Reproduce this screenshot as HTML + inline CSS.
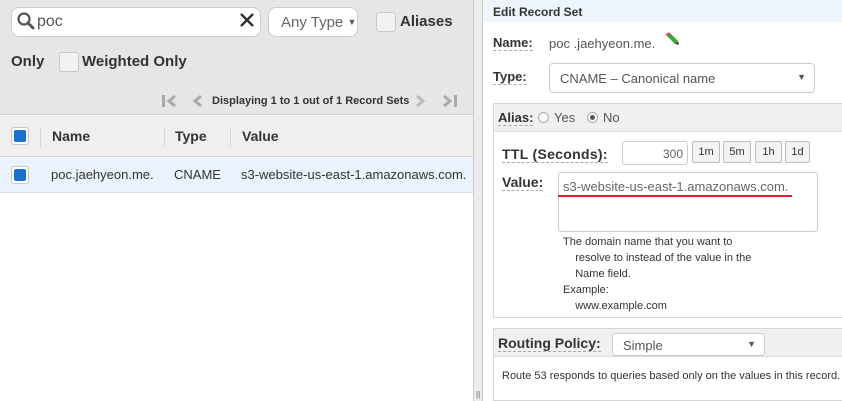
<!DOCTYPE html>
<html><head><meta charset="utf-8"><style>
*{box-sizing:border-box}
body{margin:0;width:842px;height:401px;overflow:hidden;font-family:"Liberation Sans",Arial,sans-serif;background:#fff;position:relative;color:#333}
.abs{position:absolute}
.left{left:0;top:0;width:473px;height:401px;background:#fff}
.lt{left:0;top:0;width:473px;height:115px;background:#e6e6e6;border-bottom:1px solid #d0d0d0}
.cb{position:absolute;width:20px;height:20px;border:1px solid #c8c8c8;border-radius:3px;background:#f2f2f2}
.cbb{position:absolute;width:18px;height:18px;border:1px solid #c8c8c8;border-radius:3px;background:#fff}
.cbb:after{content:"";position:absolute;left:2px;top:2px;width:12px;height:12px;background:#1a6fd0;border-radius:2px}
.b{font-weight:bold;color:#333}
.lbl{font-weight:bold;color:#333;border-bottom:1px dashed #aaa;display:inline-block}
</style></head><body>
<div class="abs left"></div>
<div class="abs lt"></div>
<div class="abs" style="left:11px;top:7px;width:250px;height:30px;background:#fff;border:1px solid #ccc;border-radius:8px"></div>
<svg class="abs" style="left:16px;top:11px" width="20" height="20"><circle cx="8" cy="8" r="5.5" fill="none" stroke="#555" stroke-width="2.2"/><line x1="12" y1="12" x2="17" y2="17" stroke="#555" stroke-width="3" stroke-linecap="round"/></svg>
<div class="abs" style="left:37px;top:13px;font-size:16px;color:#555">poc</div>
<svg class="abs" style="left:240px;top:13px" width="14" height="14"><path d="M1 1L13 13M13 1L1 13" stroke="#333" stroke-width="2.4"/></svg>
<div class="abs" style="left:268px;top:7px;width:90px;height:30px;background:#fff;border:1px solid #ccc;border-radius:8px;font-size:15px;color:#666;padding:6px 0 0 12px">Any Type <span style="font-size:9px;color:#555;position:relative;top:-2px">▼</span></div>
<div class="cb" style="left:376px;top:12px"></div>
<div class="abs b" style="left:400px;top:13px;font-size:15px">Aliases</div>
<div class="abs b" style="left:11px;top:53px;font-size:15px">Only</div>
<div class="cb" style="left:59px;top:52px"></div>
<div class="abs b" style="left:82px;top:53px;font-size:15px">Weighted Only</div>
<svg class="abs" style="left:161px;top:94px" width="20" height="14"><rect x="1" y="1" width="3" height="12" fill="#aaa"/><path d="M14 2L8 7L14 12" fill="none" stroke="#aaa" stroke-width="3"/></svg>
<svg class="abs" style="left:191px;top:94px" width="14" height="14"><path d="M10 2L4 7L10 12" fill="none" stroke="#aaa" stroke-width="3"/></svg>
<div class="abs b" style="left:212px;top:95px;font-size:11px">Displaying 1 to 1 out of 1 Record Sets</div>
<svg class="abs" style="left:413px;top:94px" width="14" height="14"><path d="M4 2L10 7L4 12" fill="none" stroke="#bbb" stroke-width="3"/></svg>
<svg class="abs" style="left:441px;top:94px" width="20" height="14"><path d="M3 2L9 7L3 12" fill="none" stroke="#aaa" stroke-width="3"/><rect x="13" y="1" width="3" height="12" fill="#aaa"/></svg>
<div class="abs" style="left:0;top:116px;width:473px;height:41px;background:#efefef;border-bottom:1px solid #d6d6d6"></div>
<div class="cbb" style="left:11px;top:127px"></div>
<div class="abs" style="left:40px;top:127px;width:1px;height:20px;background:#d6d6d6"></div>
<div class="abs" style="left:164px;top:127px;width:1px;height:20px;background:#d6d6d6"></div>
<div class="abs" style="left:230px;top:127px;width:1px;height:20px;background:#d6d6d6"></div>
<div class="abs b" style="left:52px;top:128px;font-size:14px">Name</div>
<div class="abs b" style="left:175px;top:128px;font-size:14px">Type</div>
<div class="abs b" style="left:242px;top:128px;font-size:14px">Value</div>
<div class="abs" style="left:0;top:158px;width:473px;height:35px;background:#eaf3fd;border-bottom:1px solid #d6dde6"></div>
<div class="cbb" style="left:11px;top:166px"></div>
<div class="abs" style="left:51px;top:167px;font-size:13px;color:#333">poc.jaehyeon.me.</div>
<div class="abs" style="left:174px;top:167px;font-size:13px;color:#333">CNAME</div>
<div class="abs" style="left:241px;top:167px;font-size:13px;color:#333">s3-website-us-east-1.amazonaws.com.</div>
<div class="abs" style="left:473px;top:0;width:10px;height:401px;background:#ececec;border-left:1px solid #ccc;border-right:1px solid #ccc"></div>
<div class="abs" style="left:476px;top:390px;font-size:8px;color:#666">||</div>
<div class="abs" style="left:483px;top:0;width:359px;height:22px;background:#eef4fb"></div>
<div class="abs b" style="left:493px;top:5px;font-size:12px">Edit Record Set</div>
<div class="abs lbl" style="left:493px;top:35px;font-size:13px">Name:</div>
<div class="abs" style="left:549px;top:36px;font-size:13px;color:#555">poc .jaehyeon.me.</div>
<svg class="abs" style="left:664px;top:32px" width="16" height="14"><path d="M2 3L6 1L14 9L11 12Z" fill="#3aa53a"/><path d="M2 3L6 1" stroke="#e05050" stroke-width="2"/><path d="M11 12L14 9L15 13Z" fill="#444"/></svg>
<div class="abs lbl" style="left:493px;top:69px;font-size:13px">Type:</div>
<div class="abs" style="left:549px;top:63px;width:266px;height:30px;border:1px solid #ccc;border-radius:4px;font-size:13px;color:#555;padding:7px 0 0 10px">CNAME – Canonical name<span style="position:absolute;right:8px;top:8px;font-size:9px">▼</span></div>
<div class="abs" style="left:493px;top:103px;width:360px;height:215px;border:1px solid #d6d6d6"></div>
<div class="abs" style="left:494px;top:104px;width:350px;height:28px;background:#f0f0f0;border-bottom:1px solid #ddd"></div>
<div class="abs lbl" style="left:498px;top:110px;font-size:13px">Alias:</div>
<div class="abs" style="left:538px;top:112px;width:11px;height:11px;border:1px solid #aaa;border-radius:50%;background:#fafafa"></div>
<div class="abs" style="left:554px;top:110px;font-size:13px;color:#555">Yes</div>
<div class="abs" style="left:587px;top:112px;width:11px;height:11px;border:1px solid #aaa;border-radius:50%;background:#fafafa"></div>
<div class="abs" style="left:590px;top:115px;width:5px;height:5px;border-radius:50%;background:#555"></div>
<div class="abs" style="left:603px;top:110px;font-size:13px;color:#555">No</div>
<div class="abs lbl" style="left:502px;top:146px;font-size:14px;letter-spacing:.3px">TTL (Seconds):</div>
<div class="abs" style="left:622px;top:141px;width:66px;height:24px;border:1px solid #ccc;border-radius:3px;font-size:12px;color:#666;text-align:right;padding:5px 4px 0 0">300</div>
<div class="abs" style="left:692px;top:141px;width:28px;height:22px;border:1px solid #bbb;border-radius:2px;background:#f3f3f3;font-size:11px;text-align:center;padding-top:4px">1m</div>
<div class="abs" style="left:723px;top:141px;width:28px;height:22px;border:1px solid #bbb;border-radius:2px;background:#f3f3f3;font-size:11px;text-align:center;padding-top:4px">5m</div>
<div class="abs" style="left:755px;top:141px;width:27px;height:22px;border:1px solid #bbb;border-radius:2px;background:#f3f3f3;font-size:11px;text-align:center;padding-top:4px">1h</div>
<div class="abs" style="left:785px;top:141px;width:25px;height:22px;border:1px solid #bbb;border-radius:2px;background:#f3f3f3;font-size:11px;text-align:center;padding-top:4px">1d</div>
<div class="abs lbl" style="left:502px;top:174px;font-size:14px">Value:</div>
<div class="abs" style="left:558px;top:172px;width:260px;height:60px;border:1px solid #ccc;border-radius:3px"></div>
<div class="abs" style="left:563px;top:179px;font-size:13px;color:#666">s3-website-us-east-1.amazonaws.com.</div>
<div class="abs" style="left:558px;top:195px;width:234px;height:2px;background:#e0202a"></div>
<div class="abs" style="left:563px;top:234px;font-size:11px;line-height:16px;color:#333">The domain name that you want to<br>&nbsp;&nbsp;&nbsp;&nbsp;resolve to instead of the value in the<br>&nbsp;&nbsp;&nbsp;&nbsp;Name field.<br>Example:<br>&nbsp;&nbsp;&nbsp;&nbsp;www.example.com</div>
<div class="abs" style="left:493px;top:328px;width:360px;height:73px;border:1px solid #d6d6d6"></div>
<div class="abs" style="left:494px;top:329px;width:350px;height:28px;background:#f0f0f0;border-bottom:1px solid #ddd"></div>
<div class="abs lbl" style="left:498px;top:335px;font-size:14px">Routing Policy:</div>
<div class="abs" style="left:612px;top:333px;width:153px;height:23px;border:1px solid #ccc;border-radius:3px;background:#fff;font-size:13px;color:#555;padding:4px 0 0 10px">Simple<span style="position:absolute;right:8px;top:5px;font-size:9px">▼</span></div>
<div class="abs" style="left:502px;top:370px;font-size:11px;color:#333">Route 53 responds to queries based only on the values in this record.</div>
</body></html>
